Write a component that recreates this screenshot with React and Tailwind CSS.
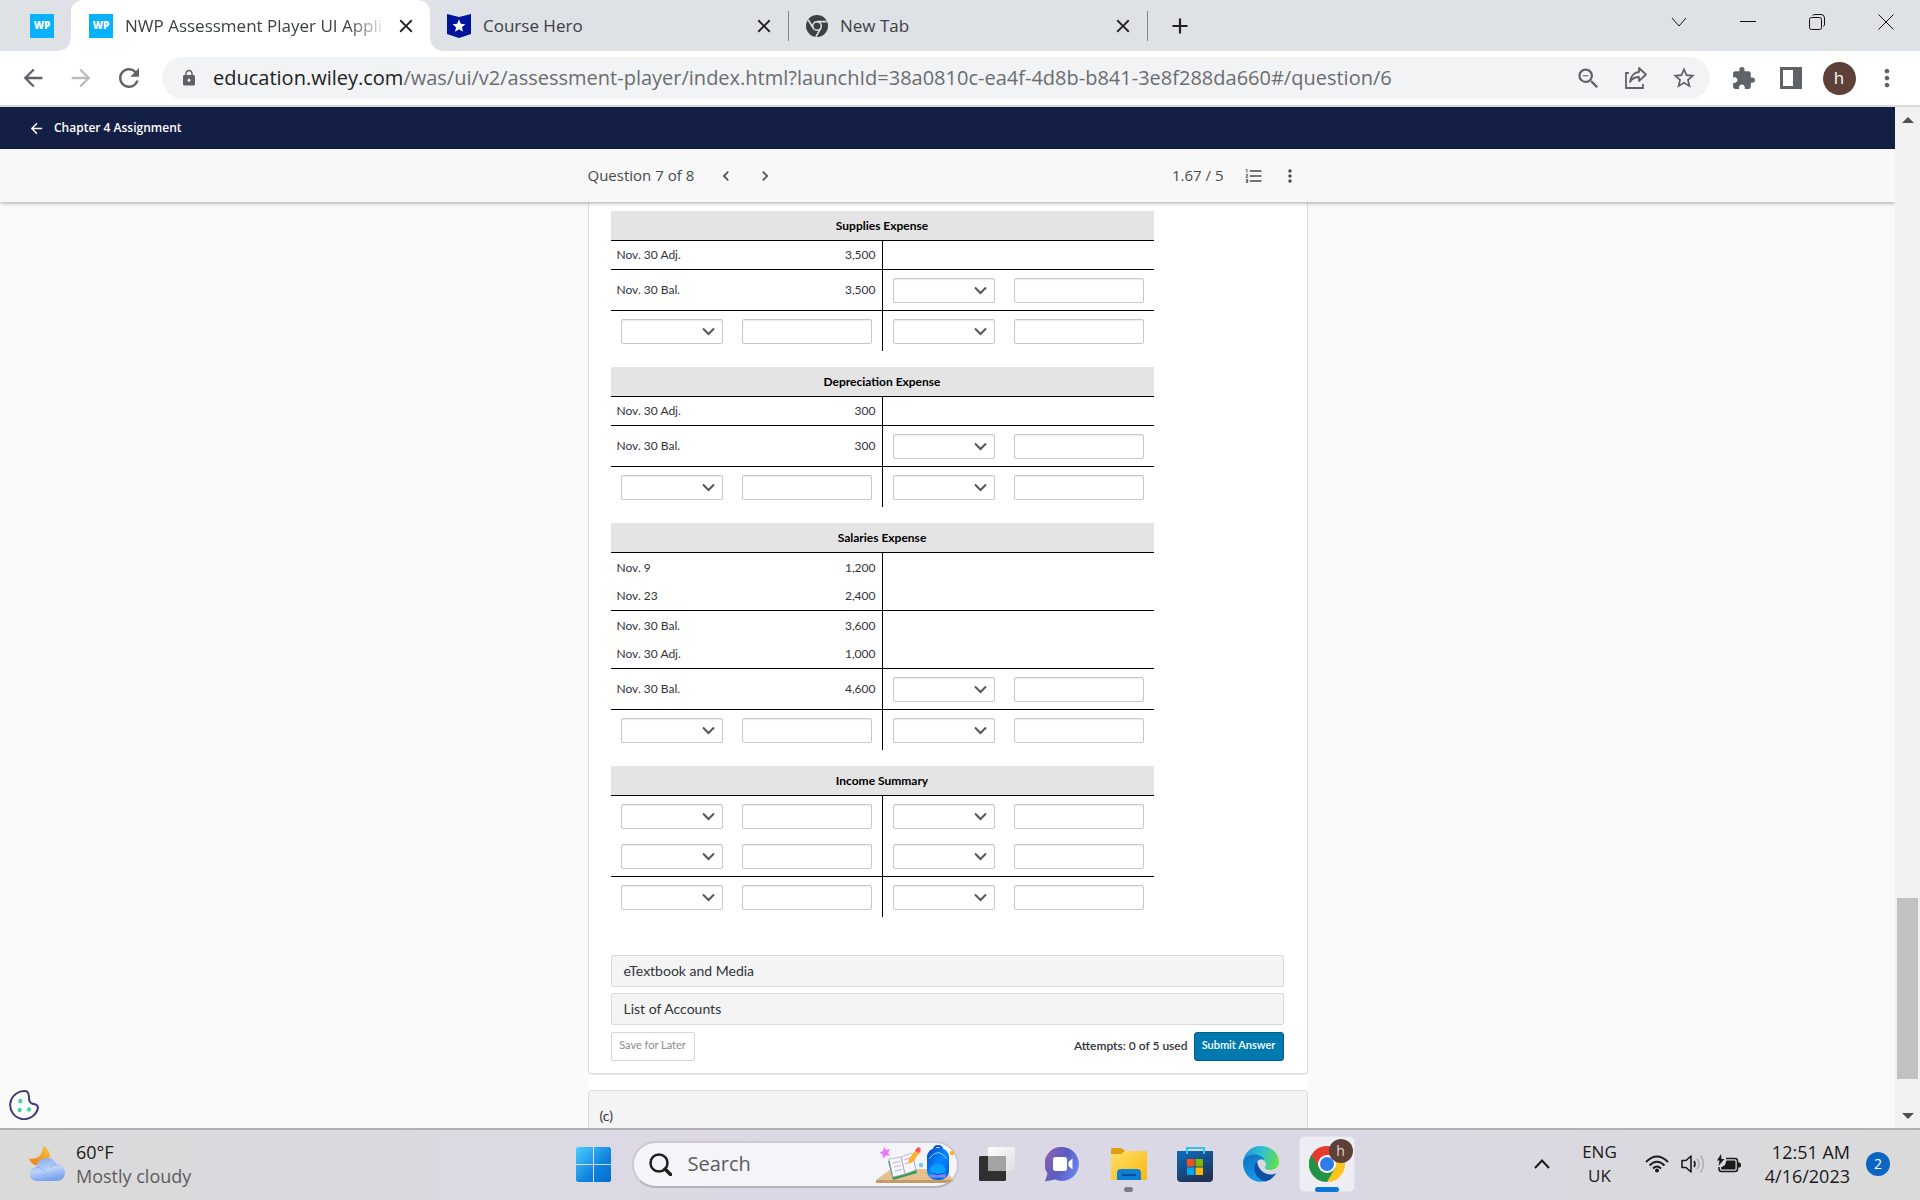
import {
  MdAdd,
  MdArrowBack,
  MdArrowForward,
  MdChevronLeft,
  MdChevronRight,
  MdClose,
  MdExtension,
  MdFormatListNumbered,
  MdLock,
  MdMoreVert,
  MdRefresh,
  MdStarBorder,
  MdZoomOut,
} from "react-icons/md";

const accounts = [
  {
    name: "Supplies Expense",
    rows: [
      { date: "Nov. 30 Adj.", amount: "3,500", line: true },
      { date: "Nov. 30 Bal.", amount: "3,500", right: true, line: true },
      { left: true, right: true },
    ],
  },
  {
    name: "Depreciation Expense",
    rows: [
      { date: "Nov. 30 Adj.", amount: "300", line: true },
      { date: "Nov. 30 Bal.", amount: "300", right: true, line: true },
      { left: true, right: true },
    ],
  },
  {
    name: "Salaries Expense",
    rows: [
      { date: "Nov. 9", amount: "1,200" },
      { date: "Nov. 23", amount: "2,400", line: true },
      { date: "Nov. 30 Bal.", amount: "3,600" },
      { date: "Nov. 30 Adj.", amount: "1,000", line: true },
      { date: "Nov. 30 Bal.", amount: "4,600", right: true, line: true },
      { left: true, right: true },
    ],
  },
  {
    name: "Income Summary",
    rows: [
      { left: true, right: true },
      { left: true, right: true, line: true },
      { left: true, right: true },
    ],
  },
];

function WpIcon() {
  return (
    <span className="flex size-6 shrink-0 items-center justify-center bg-[#07b2fb] font-['Open_Sans',sans-serif] text-[10px] font-extrabold text-white">
      WP
    </span>
  );
}

function HeroIcon() {
  return (
    <svg className="size-6 shrink-0" viewBox="0 0 24 24">
      <path d="M0 0l12 3 12-3v20l-12 4-12-4z" fill="#00149b" />
      <path d="M12 5.5l1.8 4.3 4.6.4-3.5 3 1.1 4.6-4-2.5-4 2.5 1.1-4.6-3.5-3 4.6-.4z" fill="#fff" />
    </svg>
  );
}

function ChromeMonoIcon() {
  return (
    <svg className="size-[22px] shrink-0" viewBox="0 0 24 24">
      <circle cx="12" cy="12" r="12" fill="#3c4043" />
      <circle cx="12" cy="12" r="4.7" fill="none" stroke="#dee1e6" strokeWidth="1.7" />
      <path d="M12 7.2h10.6M7.8 14.4L2.4 5.2M16.2 14.4l-5.5 9.4" stroke="#dee1e6" strokeWidth="1.7" />
    </svg>
  );
}

function Tab({ icon, title, active }) {
  return (
    <div
      className={
        active
          ? "relative flex h-full w-[359px] items-center rounded-t-[12px] bg-white pl-[18px] pr-[13px]"
          : "flex h-full w-[359px] items-center pl-[17px]"
      }
    >
      {active && (
        <>
          <span className="absolute -left-3 bottom-0 size-3 bg-[radial-gradient(circle_at_0_0,transparent_11px,white_12px)]" />
          <span className="absolute -right-3 bottom-0 size-3 bg-[radial-gradient(circle_at_100%_0,transparent_11px,white_12px)]" />
        </>
      )}
      {icon}
      <span
        className={
          active
            ? "ml-3 flex-1 whitespace-nowrap text-[17px] text-[#3c4043] [mask-image:linear-gradient(to_right,black_85%,transparent)]"
            : "ml-3 flex-1 whitespace-nowrap text-[17px] text-[#3c4043]"
        }
      >
        {title}
      </span>
      <button type="button" aria-label="Close tab" className={active ? "ml-2 text-[#202124]" : "mr-[13px] text-[#202124]"}>
        <MdClose className="size-[22px]" />
      </button>
      {!active && <span className="h-[30px] w-px bg-[#80868b]" />}
    </div>
  );
}

function TabStrip() {
  return (
    <div className="flex h-[51px] items-stretch bg-[#dee1e6]">
      <div className="flex w-[71px] items-center pl-[30px]">
        <WpIcon />
      </div>
      <Tab active icon={<WpIcon />} title="NWP Assessment Player UI Appli" />
      <Tab icon={<HeroIcon />} title="Course Hero" />
      <Tab icon={<ChromeMonoIcon />} title="New Tab" />
      <button type="button" aria-label="New tab" className="ml-[19px] text-[#202124]">
        <MdAdd className="size-[26px]" />
      </button>
      <div className="ml-auto flex h-11 items-center">
        <button type="button" aria-label="Search tabs" className="flex w-[69px] justify-center">
          <svg className="size-4" viewBox="0 0 16 16" fill="none" stroke="#111">
            <path d="M1 4l7 8 7-8" />
          </svg>
        </button>
        <button type="button" aria-label="Minimise" className="flex w-[69px] justify-center">
          <svg className="size-4" viewBox="0 0 16 16" stroke="#111">
            <path d="M0 7.5h16" />
          </svg>
        </button>
        <button type="button" aria-label="Restore" className="flex w-[69px] justify-center">
          <svg className="size-4" viewBox="0 0 16 16" fill="none" stroke="#111">
            <rect x="0.5" y="3.5" width="12" height="12" rx="2" />
            <path d="M3.500 1.500q1-1 2.500-1h6q3.500 0 3.500 3.500v6q0 1.500-1 2.500" />
          </svg>
        </button>
        <button type="button" aria-label="Close window" className="flex w-[69px] justify-center">
          <svg className="size-4" viewBox="0 0 16 16" stroke="#111">
            <path d="M0.500 0.500l15 15M15.500 0.500l-15 15" />
          </svg>
        </button>
      </div>
    </div>
  );
}

function ToolButton({ label, children }) {
  return (
    <button type="button" aria-label={label} className="flex w-12 shrink-0 justify-center text-[#5f6368]">
      {children}
    </button>
  );
}

function Toolbar() {
  return (
    <div className="flex h-14 items-center border-b-2 border-[#d9dadc] bg-white px-[9px]">
      <ToolButton label="Back">
        <MdArrowBack className="size-[28px]" />
      </ToolButton>
      <ToolButton label="Forward">
        <MdArrowForward className="size-[28px] text-[#babcbe]" />
      </ToolButton>
      <ToolButton label="Reload">
        <MdRefresh className="size-[30px]" />
      </ToolButton>
      <div className="mx-[9px] flex h-[42px] min-w-0 flex-1 items-center rounded-full bg-[#f1f3f4] pl-[18px] pr-0.5">
        <MdLock className="size-[18px] shrink-0 text-[#5f6368]" />
        <span className="ml-[15px] flex-1 overflow-hidden whitespace-nowrap text-[20px] text-[#6a6d71]">
          <span className="text-[#202124]">education.wiley.com</span>
          /was/ui/v2/assessment-player/index.html?launchId=38a0810c-ea4f-4d8b-b841-3e8f288da660#/question/6
        </span>
        <ToolButton label="Zoom">
          <MdZoomOut className="size-[27px]" />
        </ToolButton>
        <ToolButton label="Share">
          <svg className="size-6" viewBox="0 0 24 24" fill="none" stroke="currentColor" strokeWidth="1.800">
            <path d="M5 7H2v15h17v-4" />
            <path d="M15 2l7 6.500-7 6.500v-4c-4 0-7 1.500-9 5 .5-5 3.500-9.500 9-10z" strokeLinejoin="round" />
          </svg>
        </ToolButton>
        <ToolButton label="Bookmark">
          <MdStarBorder className="size-[26px]" />
        </ToolButton>
      </div>
      <ToolButton label="Extensions">
        <MdExtension className="size-[25px]" />
      </ToolButton>
      <ToolButton label="Side panel">
        <svg className="size-[22px]" viewBox="0 0 22 22">
          <path d="M0 0h22v22H0zM3 3v16h10V3z" fill="currentColor" fillRule="evenodd" />
        </svg>
      </ToolButton>
      <ToolButton label="Profile">
        <span className="flex size-[33px] items-center justify-center rounded-full bg-[#5d4037] text-[17px] text-white">
          h
        </span>
      </ToolButton>
      <ToolButton label="Menu">
        <MdMoreVert className="size-[28px]" />
      </ToolButton>
    </div>
  );
}

function EntrySelect({ label }) {
  return (
    <div className="relative">
      <select
        aria-label={label}
        className="block h-[25px] w-full appearance-none rounded-[2px] border border-[#c8c8c8] bg-white shadow-[inset_0_1px_1px_rgba(0,0,0,0.08)]"
      >
        <option value="" />
      </select>
      <svg
        className="pointer-events-none absolute right-2 top-2 h-[9px] w-[13px]"
        viewBox="0 0 13 9"
        fill="none"
        stroke="#555"
        strokeWidth="2"
      >
        <path d="M1 1.500l5.500 5.500L12 1.500" />
      </svg>
    </div>
  );
}

function EntryInput({ label }) {
  return (
    <input
      type="text"
      aria-label={label}
      className="block h-[25px] w-full rounded-[2px] border border-[#c8c8c8] bg-white px-1 shadow-[inset_0_1px_1px_rgba(0,0,0,0.08)]"
    />
  );
}

function TAccount({ name, rows }) {
  return (
    <table className="mb-4 w-[543px] table-fixed border-separate border-spacing-0 text-[12px]">
      <colgroup>
        <col className="w-[121px]" />
        <col className="w-[151px]" />
        <col className="w-[121px]" />
        <col />
      </colgroup>
      <thead>
        <tr>
          <th colSpan={4} className="h-[30px] border-b border-black bg-[#e4e4e4] p-0 text-center font-bold text-black">
            {name}
          </th>
        </tr>
      </thead>
      <tbody>
        {rows.map((row, i) => {
          const entry = row.left || row.right;
          const height = entry ? (row.line ? "h-[41px]" : "h-10") : "h-[29px]";
          const line = row.line ? "border-b border-black" : "";
          return (
            <tr key={i} className={height}>
              <td className={`${line} py-0 ${row.left ? "pl-2.5 pr-[9px]" : "px-1.5"}`}>
                {row.left ? <EntrySelect label={`${name} debit account ${i + 1}`} /> : row.date}
              </td>
              <td className={`${line} border-r border-r-black py-0 text-right ${row.left ? "px-2.5" : "px-1.5"}`}>
                {row.left ? <EntryInput label={`${name} debit amount ${i + 1}`} /> : row.amount}
              </td>
              <td className={`${line} py-0 pl-2.5 pr-[9px]`}>
                {row.right && <EntrySelect label={`${name} credit account ${i + 1}`} />}
              </td>
              <td className={`${line} px-2.5 py-0`}>
                {row.right && <EntryInput label={`${name} credit amount ${i + 1}`} />}
              </td>
            </tr>
          );
        })}
      </tbody>
    </table>
  );
}

function QuestionBar() {
  return (
    <div className="relative z-10 bg-[#f8f8f8] shadow-[0_1px_4px_rgba(0,0,0,0.35)]">
      <div className="mx-auto flex h-[53px] max-w-[720px] items-center text-[15px] text-[#4a4a4a]">
        <span>Question 7 of 8</span>
        <button type="button" aria-label="Previous question" className="ml-[22px]">
          <MdChevronLeft className="size-5" />
        </button>
        <button type="button" aria-label="Next question" className="ml-[19px]">
          <MdChevronRight className="size-5" />
        </button>
        <span className="ml-auto">1.67 / 5</span>
        <button type="button" aria-label="Question list" className="ml-5">
          <MdFormatListNumbered className="size-5" />
        </button>
        <button type="button" aria-label="More options" className="ml-4 mr-2">
          <MdMoreVert className="size-5" />
        </button>
      </div>
    </div>
  );
}

function QuestionCard() {
  return (
    <main className="mx-auto max-w-[720px] bg-white font-[Lato,sans-serif] text-[#30343b]">
      <section className="rounded-b-[3px] border-x border-b border-[#dcdcdc] pb-3 pl-[22px] pr-[23px] pt-[9px] shadow-[0_1px_1px_rgba(0,0,0,0.08)]">
        {accounts.map((account) => (
          <TAccount key={account.name} name={account.name} rows={account.rows} />
        ))}
        <div className="mt-[38px] flex flex-col gap-1.5 text-[14px]">
          <button type="button" className="h-8 rounded-[2px] border border-[#dadada] bg-[#f4f4f4] px-3 pb-0.5 text-left">
            eTextbook and Media
          </button>
          <button type="button" className="h-8 rounded-[2px] border border-[#dadada] bg-[#f4f4f4] px-3 pb-0.5 text-left">
            List of Accounts
          </button>
          <div className="flex items-center pt-px text-[11px]">
            <button type="button" className="h-[29px] w-[84px] rounded-[2px] border border-[#d4d4d4] bg-white pb-0.5 text-[#8b8b8b]">
              Save for Later
            </button>
            <span className="ml-auto mr-1.5 pb-0.5 text-[12px] font-semibold">Attempts: 0 of 5 used</span>
            <button type="button" className="h-[29px] w-[90px] rounded-[3px] border border-[#00608c] bg-[#007aae] pb-0.5 font-semibold text-white">
              Submit Answer
            </button>
          </div>
        </div>
      </section>
      <section className="mt-4 h-24 rounded-t-[3px] border border-[#dcdcdc] bg-[#f4f4f4] px-[11px] pt-3.5 text-[14px]">
        (c)
      </section>
    </main>
  );
}

function ScrollBar() {
  return (
    <div className="flex w-[25px] shrink-0 flex-col items-center bg-[#f1f1f1]">
      <svg className="h-[25px] w-3 shrink-0" viewBox="0 0 12 25">
        <path d="M0 16l6-6 6 6z" fill="#505050" />
      </svg>
      <div className="flex-[766]" />
      <div className="w-[21px] flex-[181] bg-[#c1c1c1]" />
      <div className="flex-[24]" />
      <svg className="h-[25px] w-3 shrink-0" viewBox="0 0 12 25">
        <path d="M0 10l6 6 6-6z" fill="#505050" />
      </svg>
    </div>
  );
}

function CookieButton() {
  return (
    <button type="button" aria-label="Cookie preferences" className="absolute bottom-2 left-[9px] z-10">
      <svg className="size-[30px]" viewBox="0 0 30 30">
        <path
          d="M17.500 1.300A14 14 0 1 0 29 17.500c-.5-2-1.500-3-3-3.200-4-.3-6-2-6-5.500 0-3-.3-6.500-2.500-7.500z"
          fill="#fff"
          stroke="#403a75"
          strokeWidth="2"
        />
        <circle cx="11.300" cy="11" r="2.200" fill="#4ad69b" />
        <circle cx="10.700" cy="20" r="2.200" fill="#4ad69b" />
        <circle cx="20" cy="19.500" r="2.200" fill="#4ad69b" />
      </svg>
    </button>
  );
}

function WeatherIcon() {
  return (
    <svg className="h-[36px] w-[37px]" viewBox="0 0 37 36">
      <defs>
        <linearGradient id="moon" x1="1" y1="0" x2="0" y2="1">
          <stop offset="0" stopColor="#f7c33c" />
          <stop offset="1" stopColor="#ef7d16" />
        </linearGradient>
        <linearGradient id="cloud" x1="0" y1="0" x2="0.300" y2="1">
          <stop offset="0" stopColor="#7ea6f0" />
          <stop offset="0.600" stopColor="#bcd3f8" />
          <stop offset="1" stopColor="#7aa3ee" />
        </linearGradient>
      </defs>
      <path d="M14 0c9 4 8.500 14 2 18C9 21 2 19 0 12.500c8 1.500 14-3 14-12.500z" fill="url(#moon)" />
      <path d="M8 35a7 7 0 0 1-1-14C9 15 13 12 18 12c5 0 8 2.500 9.500 6 5 0 8.500 3.500 8.500 8.500S32 35 28 35z" fill="url(#cloud)" />
      <path d="M7 21c4 0 7 1.500 8.500 4.500M27.500 18c-3 .2-5 1.500-6 3.500" fill="none" stroke="#6f9aea" opacity="0.600" />
    </svg>
  );
}

function SearchArt() {
  return (
    <svg className="h-[40px] w-[79px]" viewBox="0 0 79 40">
      <defs>
        <linearGradient id="bag" x1="0" y1="0" x2="1" y2="1">
          <stop offset="0" stopColor="#0046c0" />
          <stop offset="0.500" stopColor="#0a86ff" />
          <stop offset="1" stopColor="#0056d8" />
        </linearGradient>
      </defs>
      <path d="M15 25h52l11 11H0z" fill="#e6c08e" />
      <path d="M0 36h78q-5 3-9 3H0z" fill="#c69a66" />
      <path d="M8 3l2 3 4-1-2 4 2 3-4-.5-3 3-.5-4-3-2 3.500-1.500z" fill="#e879f9" />
      <path d="M12 17l5 19 24-7-4-17z" fill="#2f9e55" />
      <path d="M13 15l12-2 4 17-12 3zM25 13l11-4 4 17-11 4z" fill="#f7f5ff" stroke="#a9a4bd" strokeWidth="0.700" />
      <path d="M17 19l7-1.500M18 23l7-1.500M19 27l7-1.500M28 16l6-2M29 20l6-2" stroke="#bbb6cc" />
      <path d="M33 15l8-11 4 3-8 11-5 2z" fill="#ffb02e" />
      <path d="M39 7l2-3q2-2 4 1l-2 4z" fill="#f8516b" />
      <circle cx="45" cy="21" r="2.200" fill="#5ed5ea" />
      <circle cx="76" cy="9" r="2.200" fill="#ffb01f" />
      <path d="M58 6q0-4 4-4t4 4" fill="none" stroke="#0058c8" strokeWidth="2" />
      <rect x="51" y="4" width="22" height="32" rx="9" fill="url(#bag)" />
      <path d="M54 28q0-8 8-8t8 8v6H54z" fill="#0aa0ff" />
      <path d="M54 28q8 5 16 0" fill="none" stroke="#0058d0" />
      <path d="M54 32h16" stroke="#b768f5" strokeWidth="2" />
      <path d="M53 15q9-13 18 0" fill="none" stroke="#7fd0ff" />
    </svg>
  );
}

function WindowsIcon() {
  return (
    <svg className="size-[35px]" viewBox="0 0 35 35">
      <defs>
        <linearGradient id="win" gradientUnits="userSpaceOnUse" x1="0" y1="0" x2="35" y2="35">
          <stop offset="0" stopColor="#4cd0ff" />
          <stop offset="0.600" stopColor="#0f83dc" />
          <stop offset="1" stopColor="#006fcf" />
        </linearGradient>
      </defs>
      <path d="M1.500 0H17v17H0V1.500zM18 0h15.500L35 1.500V17H18zM0 18h17v17H1.500L0 33.500zM18 18h17v15.500L33.500 35H18z" fill="url(#win)" />
    </svg>
  );
}

function TaskViewIcon() {
  return (
    <svg className="size-9" viewBox="0 0 36 36">
      <defs>
        <linearGradient id="pane" x1="0" y1="0" x2="1" y2="1">
          <stop offset="0" stopColor="#fff" />
          <stop offset="1" stopColor="#dedede" />
        </linearGradient>
      </defs>
      <rect x="9" y="1" width="27" height="24" rx="1.500" fill="url(#pane)" />
      <rect x="0" y="10" width="27" height="25" rx="1.500" fill="#303030" />
      <path d="M9 10h18v15H10q-1 0-1-1z" fill="#a3a3a3" />
    </svg>
  );
}

function ChatIcon() {
  return (
    <svg className="size-[35px]" viewBox="0 0 35 35">
      <defs>
        <linearGradient id="chat" x1="0" y1="0.200" x2="1" y2="0.700">
          <stop offset="0" stopColor="#8b62ad" />
          <stop offset="0.500" stopColor="#5b5bc4" />
          <stop offset="1" stopColor="#6a86ea" />
        </linearGradient>
      </defs>
      <path d="M18 0a17 17 0 1 1-8 32.500L0 34.500l2.500-8A17 17 0 0 1 18 0z" fill="url(#chat)" />
      <rect x="8" y="10" width="14" height="14" rx="2.500" fill="#fff" />
      <path d="M23.500 15l4-3.500v11l-4-3.500z" fill="#fff" />
    </svg>
  );
}

function ExplorerIcon() {
  return (
    <svg className="size-9" viewBox="0 0 36 36">
      <defs>
        <linearGradient id="folder" x1="0" y1="0" x2="1" y2="1">
          <stop offset="0" stopColor="#ffdf70" />
          <stop offset="1" stopColor="#fbb708" />
        </linearGradient>
      </defs>
      <path d="M0 3.500Q0 2 1.500 2H10l4.500 3H34v5H0z" fill="#e09f0b" />
      <path d="M0 8h10l4-3h22v27q0 2-2 2H0z" fill="url(#folder)" />
      <path d="M6 34v-7q0-4 4-4h16q4 0 4 4v7z" fill="#0f7fd3" />
      <path d="M11 29h14" stroke="#0a4f96" strokeWidth="2" />
    </svg>
  );
}

function StoreIcon() {
  return (
    <svg className="size-9" viewBox="0 0 36 36">
      <defs>
        <linearGradient id="store" x1="0" y1="0" x2="0.500" y2="1">
          <stop offset="0" stopColor="#0b6dc0" />
          <stop offset="1" stopColor="#203458" />
        </linearGradient>
      </defs>
      <path d="M0 5h36v27q0 4-4 4H4q-4 0-4-4z" fill="url(#store)" />
      <path d="M10 8V2h17v6" fill="none" stroke="#30c4f2" strokeWidth="2" />
      <path d="M10 13h7.500v7.500H10z" fill="#f25022" />
      <path d="M18.500 13H26v7.500h-7.500z" fill="#7fba00" />
      <path d="M10 21.500h7.500V29H10z" fill="#00a4ef" />
      <path d="M18.500 21.500H26V29h-7.500z" fill="#ffb900" />
    </svg>
  );
}

function EdgeIcon() {
  return (
    <svg className="size-9" viewBox="0 0 36 36">
      <defs>
        <linearGradient id="edgeTop" x1="0" y1="0.300" x2="1" y2="0.500">
          <stop offset="0" stopColor="#1b95dc" />
          <stop offset="0.500" stopColor="#2fc0d0" />
          <stop offset="1" stopColor="#62e04c" />
        </linearGradient>
        <linearGradient id="edgeBody" x1="0" y1="0" x2="0.400" y2="1">
          <stop offset="0" stopColor="#0f6fc0" />
          <stop offset="1" stopColor="#149be8" />
        </linearGradient>
      </defs>
      <path d="M0 18C0 7 8 0 18 0s18 7.500 18 16c0 5-4 8-9 8-4 0-6-1.500-5-3 3-4-1-8-6-8C8 11 1 13 0 18z" fill="url(#edgeTop)" />
      <path d="M0 17C1 11 6 8.500 11 8.500c6 0 10 3.500 11 5.500-5-2-9 1-9 6 0 8 6 14 12 14C12 40 0 30 0 17z" fill="url(#edgeBody)" />
      <path d="M14 15c-5 6-3 17 8 20.500 5-1 9-4.500 11.500-8.500-7 4-18 0-19.500-12z" fill="#0d4fa3" />
    </svg>
  );
}

function ChromeIcon() {
  return (
    <svg className="size-9" viewBox="0 0 36 36">
      <path d="M18 18L2.400 9A18 18 0 0 1 33.600 9z" fill="#e33b2e" />
      <path d="M18 18L33.600 9A18 18 0 0 1 18 36z" fill="#fcc31e" />
      <path d="M18 18v18A18 18 0 0 1 2.400 9z" fill="#219447" />
      <path d="M18 9h15.600l-7.800 13.500z" fill="#fcc31e" />
      <path d="M25.800 22.500L18 36l-7.800-13.500z" fill="#219447" />
      <path d="M10.200 22.500L2.400 9H18z" fill="#e33b2e" />
      <path d="M10.200 22.500L2.400 9A18 18 0 0 0 10 34z" fill="#219447" />
      <circle cx="18" cy="18" r="9" fill="#fff" />
      <circle cx="18" cy="18" r="7" fill="#2f7bea" />
    </svg>
  );
}

function TaskButton({ label, children }) {
  return (
    <button type="button" aria-label={label} className="relative flex h-14 w-[66px] items-center justify-center">
      {children}
    </button>
  );
}

function TaskBar() {
  return (
    <footer className="grid h-[72px] shrink-0 grid-cols-[1fr_auto_1fr] items-center border-t-2 border-[#b0b0b4] bg-[linear-gradient(to_right,#dadada,#dbd8e5_40%,#dad8e4_70%,#dadada)] pb-0.5 text-[18px] leading-6">
      <div className="flex items-center pl-[29px]">
        <WeatherIcon />
        <div className="ml-2.5">
          <div className="text-[#1a1a1a]">60°F</div>
          <div className="text-[#5c5c5c]">Mostly cloudy</div>
        </div>
      </div>

      <div className="flex items-center">
        <TaskButton label="Start">
          <WindowsIcon />
        </TaskButton>
        <label className="mx-[5px] flex h-[47px] w-[327px] items-center rounded-full border-2 border-[#cbc8d4] border-b-[#b5b2be] bg-[#f5f4f9] pl-[15px]">
          <svg className="size-[23px] shrink-0" viewBox="0 0 23 23" fill="none" stroke="#1f1f1f" strokeWidth="2.500">
            <circle cx="10" cy="10" r="8.500" />
            <path d="M16 16l5.500 5.500" strokeWidth="3.500" strokeLinecap="round" />
          </svg>
          <input
            type="text"
            aria-label="Search"
            placeholder="Search"
            className="ml-4 w-0 min-w-0 flex-1 bg-transparent text-[20px] placeholder:text-[#5c5c5c]"
          />
          <span className="mr-0.5">
            <SearchArt />
          </span>
        </label>
        <TaskButton label="Task view">
          <TaskViewIcon />
        </TaskButton>
        <TaskButton label="Chat">
          <ChatIcon />
        </TaskButton>
        <TaskButton label="File Explorer">
          <ExplorerIcon />
          <span className="absolute bottom-0 h-[5px] w-[9px] rounded-full bg-[#7d7a86]" />
        </TaskButton>
        <TaskButton label="Microsoft Store">
          <StoreIcon />
        </TaskButton>
        <TaskButton label="Edge">
          <EdgeIcon />
        </TaskButton>
        <TaskButton label="Chrome">
          <span className="flex size-14 items-center justify-center rounded-[5px] border border-[#e2e0e9] bg-[#eeedf3]">
            <ChromeIcon />
          </span>
          <span className="absolute right-[7px] top-[3px] flex size-6 items-center justify-center rounded-full bg-[#5d4037] text-[14px] text-[#e0d8d5]">
            h
          </span>
          <span className="absolute bottom-0 h-[5px] w-6 rounded-full bg-[#0a78d6]" />
        </TaskButton>
      </div>

      <div className="flex items-center justify-end pr-[30px] text-[#1a1a1a]">
        <svg className="h-[10px] w-4" viewBox="0 0 16 10" fill="none" stroke="currentColor" strokeWidth="2">
          <path d="M1 9l7-7.500L15 9" />
        </svg>
        <div className="ml-8 text-center text-[17px]">
          <div>ENG</div>
          <div>UK</div>
        </div>
        <svg className="ml-7 h-[18px] w-6" viewBox="0 0 24 18" fill="none" stroke="currentColor" strokeWidth="1.800">
          <path d="M1 7q11-11 22 0M4.500 10.500q7.500-7.500 15 0M8 13.500q4-4 8 0" />
          <circle cx="12" cy="15.500" r="2" fill="currentColor" stroke="none" />
        </svg>
        <svg className="ml-3 h-5 w-6" viewBox="0 0 24 20" fill="none" stroke="currentColor" strokeWidth="1.600">
          <path d="M1 6.500h4l5-4.500v16l-5-4.500H1z" strokeLinejoin="round" />
          <path d="M13 7q2 3 0 6" />
          <path d="M16 4.500q4 5.500 0 11M19.500 1.500q6 8.500 0 17" stroke="#b0b0b0" />
        </svg>
        <svg className="ml-3 h-5 w-6" viewBox="0 0 24 20">
          <path d="M9 4.500h9q2.500 0 2.500 2.500v8q0 2.500-2.500 2.500H4.500q-2.500 0-2.500-2.500v-2" fill="none" stroke="currentColor" strokeWidth="1.500" />
          <path d="M9.500 6.500h8q1 0 1 1v7q0 1-1 1H5q-1 0-1-1v-1l4-2.500z" fill="currentColor" />
          <path d="M21 8.500h1.500q1.500 0 1.500 2.500t-1.500 2.500H21z" fill="currentColor" />
          <path d="M4 0L0 6.500h2.500L1.500 12 7.500 5H4.500z" fill="currentColor" />
        </svg>
        <div className="ml-6 text-right">
          <div>12:51 AM</div>
          <div>4/16/2023</div>
        </div>
        <span className="ml-4 flex size-6 items-center justify-center rounded-full bg-[#0a66c2] text-[14px] text-white">
          2
        </span>
      </div>
    </footer>
  );
}

export default function App() {
  return (
    <div className="flex h-screen flex-col overflow-hidden bg-[#fafafa] font-['Open_Sans','Noto_Sans',sans-serif]">
      <header>
        <TabStrip />
        <Toolbar />
      </header>
      <div className="flex min-h-0 flex-1">
        <div className="relative min-w-0 flex-1 overflow-hidden">
          <a
            href="#assignment"
            className="flex h-[42px] items-center bg-[#141f45] pl-7 text-[12px] font-semibold text-white"
          >
            <MdArrowBack className="mr-[9px] size-[17px]" />
            Chapter 4 Assignment
          </a>
          <QuestionBar />
          <QuestionCard />
          <CookieButton />
        </div>
        <ScrollBar />
      </div>
      <TaskBar />
    </div>
  );
}
